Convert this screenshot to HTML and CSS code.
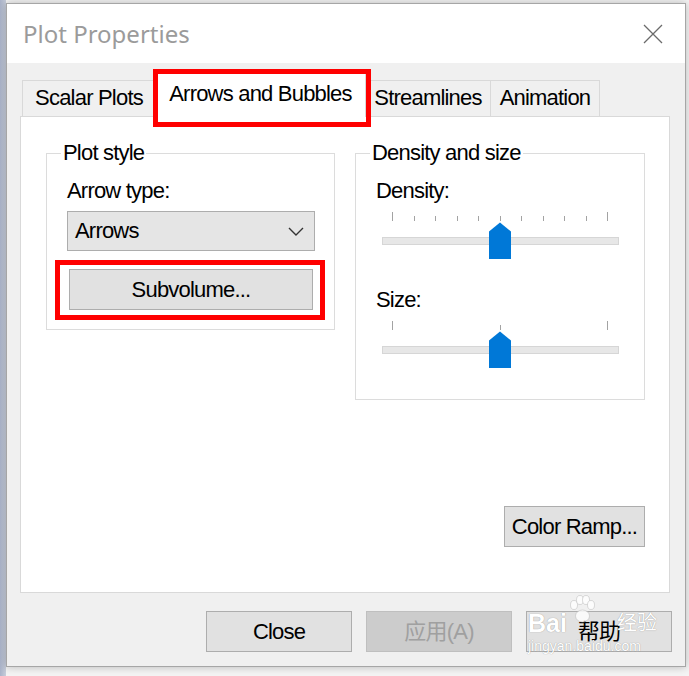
FILE: index.html
```html
<!DOCTYPE html>
<html>
<head>
<meta charset="utf-8">
<link rel="stylesheet" href="styles.css">
</head>
<body>
<div class="dialog">
  <div class="titlebar">
    <span class="title">Plot Properties</span>
    <svg class="close-x" width="20" height="20" viewBox="0 0 20 20"><path d="M1 1L19 19M19 1L1 19" stroke="#6b6b6b" stroke-width="1.3" fill="none"/></svg>
  </div>
  <div class="body">
    <div class="tabs">
      <div class="tab t1">Scalar Plots</div>
      <div class="tab t2 active">Arrows and Bubbles</div>
      <div class="tab t3">Streamlines</div>
      <div class="tab t4">Animation</div>
    </div>
    <div class="panel">
      <div class="groups">
        <fieldset class="group g1">
          <legend>Plot style</legend>
          <div class="group-inner g1-inner">
            <div class="label">Arrow type:</div>
            <div class="combo">
              <span>Arrows</span>
              <svg width="16" height="9" viewBox="0 0 16 9"><path d="M1 1L8 8L15 1" stroke="#333" stroke-width="1.4" fill="none"/></svg>
            </div>
            <div class="btn subvol">Subvolume...</div>
          </div>
        </fieldset>
        <fieldset class="group g2">
          <legend>Density and size</legend>
          <div class="group-inner g2-inner">
            <div class="label">Density:</div>
            <div class="slider">
              <div class="ticks">
                <span class="tick end"></span><span class="tick"></span><span class="tick"></span><span class="tick"></span><span class="tick"></span><span class="tick"></span><span class="tick"></span><span class="tick"></span><span class="tick"></span><span class="tick"></span><span class="tick end"></span>
              </div>
              <div class="track"></div>
              <svg class="thumb" width="22" height="37" viewBox="0 0 22 37"><path d="M11 0.5L22 9.5V37H0V9.5Z" fill="#0078d7"/></svg>
            </div>
            <div class="label size-label">Size:</div>
            <div class="slider">
              <div class="ticks">
                <span class="tick end"></span><span class="tick"></span><span class="tick end"></span>
              </div>
              <div class="track"></div>
              <svg class="thumb" width="22" height="37" viewBox="0 0 22 37"><path d="M11 0.5L22 9.5V37H0V9.5Z" fill="#0078d7"/></svg>
            </div>
          </div>
        </fieldset>
      </div>
      <div class="ramp-row"><div class="btn ramp">Color Ramp...</div></div>
    </div>
    <div class="footer">
      <div class="btn fbtn">Close</div>
      <div class="btn fbtn disabled">应用(A)</div>
      <div class="btn fbtn">帮助</div>
      <div class="watermark">
        <div class="wm-top">
          <span class="wm-bai">Bai</span>
          <svg class="wm-paw" width="26" height="30" viewBox="0 0 26 30">
            <ellipse cx="5" cy="10" rx="3.5" ry="4.5" fill="#fff" stroke="#bbb" stroke-width="0.6"/>
            <ellipse cx="11" cy="5" rx="3.5" ry="4.5" fill="#fff" stroke="#bbb" stroke-width="0.6"/>
            <ellipse cx="17" cy="5" rx="3.5" ry="4.5" fill="#fff" stroke="#bbb" stroke-width="0.6"/>
            <ellipse cx="22" cy="10" rx="3.5" ry="4.5" fill="#fff" stroke="#bbb" stroke-width="0.6"/>
            <ellipse cx="13.5" cy="21" rx="7" ry="6" fill="#fff" stroke="#bbb" stroke-width="0.6"/>
          </svg>
          <span class="wm-jy">经验</span>
        </div>
        <div class="wm-url">jingyan.baidu.com</div>
      </div>
    </div>
  </div>
</div>
</body>
</html>
```

FILE: styles.css
```css
* { box-sizing: border-box; }

body {
  margin: 0;
  width: 689px;
  height: 676px;
  overflow: hidden;
  background: linear-gradient(to right, #aab3c9 0, #c8cedb 6px, #f4f4f4 6px);
  font-family: "Liberation Sans", "Noto Sans CJK SC", sans-serif;
  font-size: 22px;
  letter-spacing: -0.8px;
  color: #000;
}

.dialog {
  margin: 3px 0 0 6px;
  width: 680px;
  height: 664px;
  border: 1px solid #a6a6a6;
  background: #f0f0f0;
  box-shadow: 0 0 8px rgba(0, 0, 0, 0.25);
  display: flex;
  flex-direction: column;
}

.titlebar {
  height: 59px;
  background: #fff;
  display: flex;
  align-items: center;
  justify-content: space-between;
  padding: 0 22px 0 16px;
}

.title {
  font-family: "Noto Sans", sans-serif;
  font-size: 24px;
  letter-spacing: 0;
  color: #9b9b9b;
}

.close-x { display: block; }

.body {
  flex: 1;
  display: flex;
  flex-direction: column;
  padding: 7px 15px 14px 13px;
}

.tabs {
  display: flex;
  align-items: flex-end;
  height: 46px;
  padding-left: 2px;
}

.tab {
  height: 36px;
  border: 1px solid #d9d9d9;
  border-bottom: none;
  background: #f0f0f0;
  text-align: center;
  line-height: 24px;
  padding-top: 5px;
  margin-right: -1px;
}

.t1 { width: 134px; }
.t2 { width: 211px; }
.t3 { width: 126px; }
.t4 { width: 110px; }

.tab.active {
  height: 47px;
  margin-bottom: -1px;
  background: #fff;
  padding-top: 11px;
  position: relative;
  z-index: 1;
}

.tab.active::after {
  content: "";
  position: absolute;
  left: -3px;
  top: -2px;
  right: -6px;
  bottom: -10px;
  border: 5px solid #f00;
}

.panel {
  flex: 0 0 477px;
  background: #fff;
  border: 1px solid #d9d9d9;
  padding: 24px 24px 45px 25px;
  display: flex;
  flex-direction: column;
}

.groups {
  display: flex;
  gap: 20px;
  align-items: flex-start;
}

.group {
  margin: 0;
  padding: 0;
  border: 1px solid #dcdcdc;
  min-width: 0;
}

.g1 { width: 290px; }
.g2 { width: 291px; }

.group legend {
  margin-left: 14px;
  padding: 0 2px;
  line-height: 24px;
}

.group-inner {
  padding: 14px 20px 19px 20px;
}

.g2-inner { padding-bottom: 31px; }

.label { line-height: 24px; }

.combo {
  margin-top: 8px;
  height: 40px;
  width: 248px;
  background: #e5e5e5;
  border: 1px solid #adadad;
  display: flex;
  align-items: center;
  justify-content: space-between;
  padding: 0 10px 0 7px;
  line-height: 24px;
}

.combo svg { display: block; }

.btn {
  background: #e1e1e1;
  border: 1px solid #adadad;
  display: flex;
  align-items: center;
  justify-content: center;
  line-height: 24px;
}

.subvol {
  margin: 18px 0 0 2px;
  width: 244px;
  height: 41px;
  position: relative;
}

.subvol::after {
  content: "";
  position: absolute;
  left: -15px;
  top: -10px;
  right: -13px;
  bottom: -11px;
  border: 5px solid #f00;
}

.slider {
  position: relative;
  width: 237px;
  height: 50px;
  margin: 6px 0 0 6px;
}

.ticks {
  display: flex;
  justify-content: space-between;
  align-items: flex-end;
  height: 12px;
  padding: 0 11px 0 10px;
}

.tick {
  width: 1px;
  height: 5px;
  background: #a3a3a3;
}

.tick.end { height: 9px; }

.track {
  margin-top: 16px;
  height: 8px;
  background: #e7e7e7;
  border: 1px solid #d6d6d6;
}

.thumb {
  position: absolute;
  left: 107px;
  top: 13px;
  display: block;
}

.size-label { margin-top: 29px; }

.ramp-row {
  margin-top: auto;
  display: flex;
  justify-content: flex-end;
}

.ramp {
  width: 141px;
  height: 41px;
}

.footer {
  margin-top: 18px;
  margin-right: -2px;
  display: flex;
  justify-content: flex-end;
  gap: 14px;
  position: relative;
}

.fbtn {
  width: 146px;
  height: 41px;
}

.fbtn.disabled {
  background: #cccccc;
  border-color: #bfbfbf;
  color: #a0a0a0;
}

.watermark {
  position: absolute;
  left: 508px;
  top: -14px;
  width: 140px;
  color: #fff;
  letter-spacing: 0;
  text-shadow: 0 0 1px rgba(0, 0, 0, 0.4);
  pointer-events: none;
}

.wm-top {
  display: flex;
  align-items: flex-end;
  height: 40px;
}

.wm-bai {
  font-size: 25px;
  font-weight: bold;
  line-height: 28px;
}

.wm-paw {
  display: block;
  margin: 0 22px 12px 2px;
  opacity: 0.85;
}

.wm-jy {
  font-size: 20px;
  line-height: 28px;
}

.wm-url {
  font-size: 14px;
  line-height: 18px;
}
```
